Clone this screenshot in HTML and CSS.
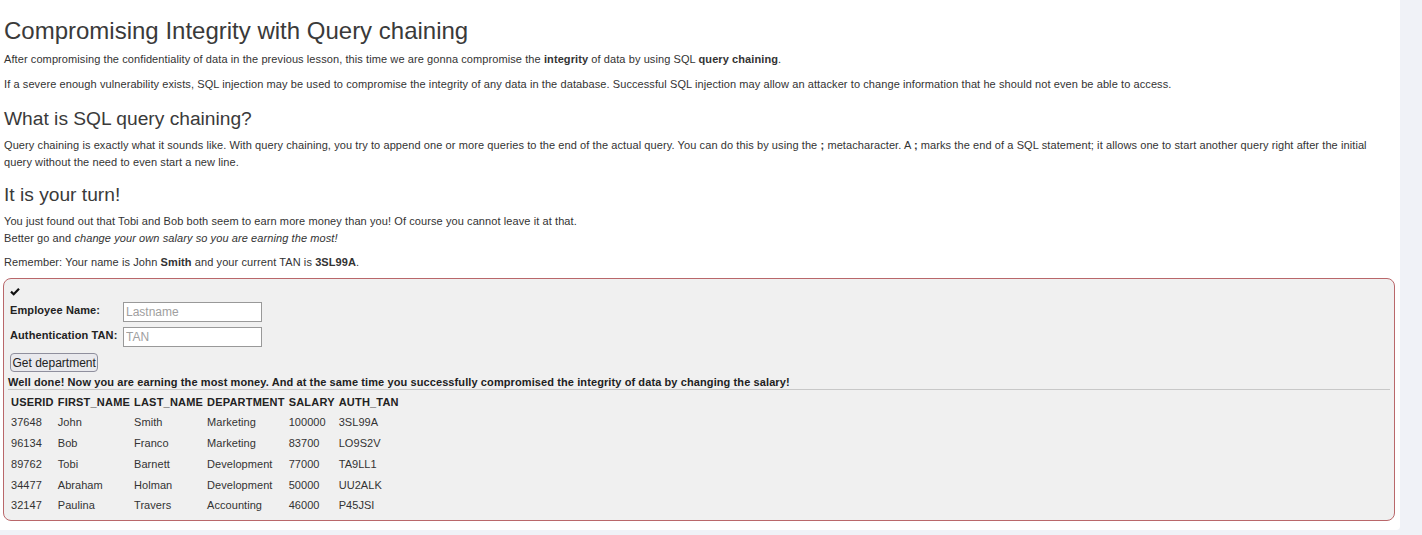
FILE: index.html
```html
<!DOCTYPE html>
<html>
<head>
<meta charset="utf-8">
<link rel="stylesheet" href="styles.css">
</head>
<body>
<div class="page">
  <h1 class="title">Compromising Integrity with Query chaining</h1>
  <p class="text first">After compromising the confidentiality of data in the previous lesson, this time we are gonna compromise the <b>integrity</b> of data by using SQL <b>query chaining</b>.</p>
  <p class="text">If a severe enough vulnerability exists, SQL injection may be used to compromise the integrity of any data in the database. Successful SQL injection may allow an attacker to change information that he should not even be able to access.</p>
  <h2 class="subtitle">What is SQL query chaining?</h2>
  <p class="text">Query chaining is exactly what it sounds like. With query chaining, you try to append one or more queries to the end of the actual query. You can do this by using the <b>;</b> metacharacter. A <b>;</b> marks the end of a SQL statement; it allows one to start another query right after the initial query without the need to even start a new line.</p>
  <h2 class="subtitle turn">It is your turn!</h2>
  <p class="text">You just found out that Tobi and Bob both seem to earn more money than you! Of course you cannot leave it at that.<br>Better go and <i>change your own salary so you are earning the most!</i></p>
  <p class="text">Remember: Your name is John <b>Smith</b> and your current TAN is <b>3SL99A</b>.</p>

  <div class="attack">
    <div class="check"><svg width="10" height="9" viewBox="0 0 10 9"><path d="M1 4.6 L3.7 7.3 L9 1.8" fill="none" stroke="#111" stroke-width="2.2"/></svg></div>
    <div class="form-row">
      <label class="lbl">Employee Name:</label>
      <input class="inp" type="text" placeholder="Lastname">
    </div>
    <div class="form-row">
      <label class="lbl">Authentication TAN:</label>
      <input class="inp" type="text" placeholder="TAN">
    </div>
    <div class="btn-row"><button class="btn">Get department</button></div>
    <div class="feedback">Well done! Now you are earning the most money. And at the same time you successfully compromised the integrity of data by changing the salary!</div>
    <div class="rule"></div>
    <table class="results">
      <tr><th>USERID</th><th>FIRST_NAME</th><th>LAST_NAME</th><th>DEPARTMENT</th><th>SALARY</th><th>AUTH_TAN</th></tr>
      <tr><td>37648</td><td>John</td><td>Smith</td><td>Marketing</td><td>100000</td><td>3SL99A</td></tr>
      <tr><td>96134</td><td>Bob</td><td>Franco</td><td>Marketing</td><td>83700</td><td>LO9S2V</td></tr>
      <tr><td>89762</td><td>Tobi</td><td>Barnett</td><td>Development</td><td>77000</td><td>TA9LL1</td></tr>
      <tr><td>34477</td><td>Abraham</td><td>Holman</td><td>Development</td><td>50000</td><td>UU2ALK</td></tr>
      <tr><td>32147</td><td>Paulina</td><td>Travers</td><td>Accounting</td><td>46000</td><td>P45JSI</td></tr>
    </table>
  </div>
</div>
</body>
</html>
```

FILE: styles.css
```css
html, body {
  margin: 0;
  padding: 0;
}
body {
  background: #f0f2f7;
  font-family: "Liberation Sans", Arial, sans-serif;
  font-size: 11px;
  color: #333;
  height: 535px;
  overflow: hidden;
}
.page {
  width: 1392px;
  height: 530px;
  padding: 0 4px;
  background: #fff;
  border-bottom-right-radius: 4px;
  box-sizing: content-box;
}
.title {
  margin: 0 0 6px;
  padding-top: 17px;
  font-size: 24px;
  font-weight: normal;
  line-height: 28px;
  color: #3a3a3a;
}
.subtitle {
  margin: 13.5px 0 6px;
  font-size: 19.2px;
  font-weight: normal;
  line-height: 24px;
  color: #3a3a3a;
}
.subtitle.turn {
  margin-top: 12.5px;
  margin-bottom: 6px;
}
.text {
  margin: 0 0 7px;
  line-height: 17px;
  letter-spacing: 0.09px;
}
.text.first {
  margin-bottom: 8px;
}
.attack {
  border: 1px solid #b9676a;
  border-radius: 8px;
  background: #f0f0f0;
  width: 1392px;
  margin-left: -1px;
  padding: 4px;
  box-sizing: border-box;
  height: 243px;
}
.check {
  height: 17px;
  padding-left: 2px;
  display: flex;
  align-items: center;
}
.form-row {
  display: flex;
  align-items: flex-start;
  height: 25px;
  padding-left: 2px;
}
.lbl {
  font-weight: bold;
  width: 113px;
  color: #222;
  letter-spacing: 0.1px;
  line-height: 16px;
  padding-top: 2px;
}
.inp {
  width: 139px;
  height: 20px;
  margin-top: 2px;
  box-sizing: border-box;
  border: 1px solid #999;
  font-family: "Liberation Sans", Arial, sans-serif;
  font-size: 12px;
  padding: 1px 2px;
  background: #fff;
}
.inp::placeholder {
  color: #a0a0a0;
}
.btn-row {
  padding-left: 2px;
  height: 25px;
  display: flex;
  align-items: center;
}
.btn {
  font-family: "Liberation Sans", Arial, sans-serif;
  font-size: 12px;
  color: #222;
  background: #e9e9ed;
  border: 1px solid #8f8f9d;
  border-radius: 4px;
  height: 19px;
  padding: 0 1.5px;
  margin: 0;
}
.feedback {
  font-weight: bold;
  color: #222;
  line-height: 14px;
  letter-spacing: 0.1px;
}
.rule {
  height: 0;
  border-top: 1px solid #c8c8c8;
  margin: 0;
}
.results {
  border-collapse: separate;
  border-spacing: 2px 0;
  margin-top: 1px;
}
.results th {
  text-align: left;
  font-weight: bold;
  color: #222;
  height: 21px;
  padding: 0 1px;
  letter-spacing: 0.2px;
}
.results td {
  height: 20.75px;
  padding: 0 1px;
  color: #333;
  letter-spacing: 0.05px;
}
```
